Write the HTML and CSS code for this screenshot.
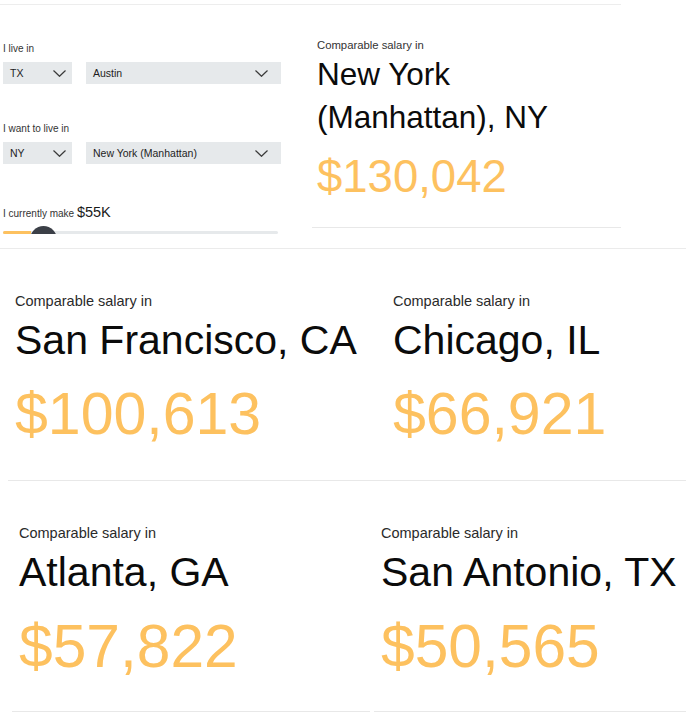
FILE: index.html
```html
<!DOCTYPE html>
<html lang="en">
<head>
    <meta charset="UTF-8">
    <meta name="viewport" content="width=device-width, initial-scale=1.0">
    <title>Comparable Salary</title>
    <link rel="stylesheet" href="styles.css">
</head>
<body>
    <div class="top-wrap">
        <div class="top">
            <div class="controls">
                <div class="field">
                    <label>I live in</label>
                    <div class="selects">
                        <div class="select state">TX
                            <svg class="chev" width="13" height="7" viewBox="0 0 13 7"><polyline points="0.5,0.5 6.5,6.3 12.5,0.5"/></svg>
                        </div>
                        <div class="select city">Austin
                            <svg class="chev" width="13" height="7" viewBox="0 0 13 7"><polyline points="0.5,0.5 6.5,6.3 12.5,0.5"/></svg>
                        </div>
                    </div>
                </div>
                <div class="field">
                    <label>I want to live in</label>
                    <div class="selects">
                        <div class="select state">NY
                            <svg class="chev" width="13" height="7" viewBox="0 0 13 7"><polyline points="0.5,0.5 6.5,6.3 12.5,0.5"/></svg>
                        </div>
                        <div class="select city">New York (Manhattan)
                            <svg class="chev" width="13" height="7" viewBox="0 0 13 7"><polyline points="0.5,0.5 6.5,6.3 12.5,0.5"/></svg>
                        </div>
                    </div>
                </div>
                <div class="income">I currently make <span>$55K</span></div>
                <div class="slider">
                    <div class="fill"></div>
                    <div class="thumb"></div>
                </div>
            </div>

            <div class="card main">
                <p class="caption">Comparable salary in</p>
                <h2 class="city-name">New York (Manhattan), NY</h2>
                <p class="salary">$130,042</p>
            </div>
        </div>
    </div>

    <div class="row first">
        <div class="card">
            <p class="caption">Comparable salary in</p>
            <h2 class="city-name">San Francisco, CA</h2>
            <p class="salary">$100,613</p>
        </div>
        <div class="card">
            <p class="caption">Comparable salary in</p>
            <h2 class="city-name">Chicago, IL</h2>
            <p class="salary">$66,921</p>
        </div>
    </div>

    <div class="row second">
        <div class="card">
            <p class="caption">Comparable salary in</p>
            <h2 class="city-name">Atlanta, GA</h2>
            <p class="salary">$57,822</p>
        </div>
        <div class="card">
            <p class="caption">Comparable salary in</p>
            <h2 class="city-name">San Antonio, TX</h2>
            <p class="salary">$50,565</p>
        </div>
    </div>
</body>
</html>
```

FILE: styles.css
```css
* {
    margin: 0;
    padding: 0;
    box-sizing: border-box;
}

body {
    width: 686px;
    background: #fff;
    color: #0b0b0b;
    font-family: 'Liberation Sans', Arial, sans-serif;
    overflow: hidden;
}

/* top block: controls + first result */
.top-wrap {
    padding-top: 4px;
    height: 249px;
    border-bottom: 1px solid #ebebeb;
}

.top {
    width: 621px;
    height: 244px;
    border-top: 1px solid #ededed;
    display: flex;
    align-items: flex-start;
}

.controls {
    width: 281px;
    height: 229px;
    padding: 38px 0 0 3px;
    overflow: hidden;
    flex-shrink: 0;
}

.field {
    margin-bottom: 40px;
}

.field:first-child {
    margin-bottom: 39px;
}

.field label {
    display: block;
    height: 12px;
    font-size: 10px;
    line-height: 12px;
    color: #333;
    margin-bottom: 7px;
}

.selects {
    display: flex;
    gap: 14px;
}

.select {
    height: 22px;
    display: flex;
    align-items: center;
    padding-left: 7px;
    background: #e6e9eb;
    font-size: 10.5px;
    color: #1d1d1d;
}

.select.state {
    width: 69px;
    padding-right: 6px;
}

.select.city {
    width: 195px;
    padding-right: 13px;
}

.chev {
    margin-left: auto;
    fill: none;
    stroke: #3a3a3a;
    stroke-width: 1.2;
}

.income {
    height: 16px;
    font-size: 10px;
    line-height: 16px;
    color: #333;
}

.income span {
    font-size: 14.5px;
    color: #1a1a1a;
}

.slider {
    position: relative;
    margin-top: 11px;
    width: 275px;
    height: 3px;
    background: #e6e9eb;
    border-radius: 2px;
}

.slider .fill {
    width: 28px;
    height: 3px;
    background: #fdc15f;
    border-radius: 2px 0 0 2px;
}

.slider .thumb {
    position: absolute;
    left: 27px;
    top: -5px;
    width: 27px;
    height: 27px;
    border-radius: 50%;
    background: #3b3f47;
}

/* result cards */
.card.main {
    margin-left: 31px;
    width: 309px;
    padding: 33px 0 24px 5px;
    border-bottom: 1px solid #e8e8e8;
}

.card.main .caption {
    font-size: 11.3px;
    line-height: 14px;
    color: #333;
}

.card.main .city-name {
    margin-top: 1px;
    font-size: 31.5px;
    line-height: 43px;
    font-weight: normal;
    white-space: normal;
    padding-right: 10px;
}

.card.main .salary {
    margin-top: 11.5px;
    font-size: 45.5px;
    line-height: 52px;
    color: #fdc15f;
}

.row {
    display: flex;
}

.row .card {
    flex-shrink: 0;
}

.row.first {
    margin-left: 8px;
    border-bottom: 1px solid #e8e8e8;
}

.row.first .card {
    width: 378px;
    padding: 43.5px 0 34px 7px;
}

.row.first .card + .card {
    width: 300px;
}

.row.second {
    margin-left: 12px;
    gap: 4px;
}

.row.second .card {
    width: 358px;
    padding: 43.5px 0 33px 7px;
    border-bottom: 1px solid #e8e8e8;
}

.row.second .card + .card {
    width: 312px;
}

.row.second .salary {
    font-size: 60.5px;
}

.caption {
    font-size: 14.5px;
    line-height: 17px;
    color: #2a2a2a;
}

.city-name {
    margin-top: 6px;
    font-size: 41px;
    line-height: 48px;
    font-weight: normal;
    white-space: nowrap;
}

.salary {
    margin-top: 18.5px;
    font-size: 59px;
    line-height: 64px;
    color: #fdc15f;
}
```
